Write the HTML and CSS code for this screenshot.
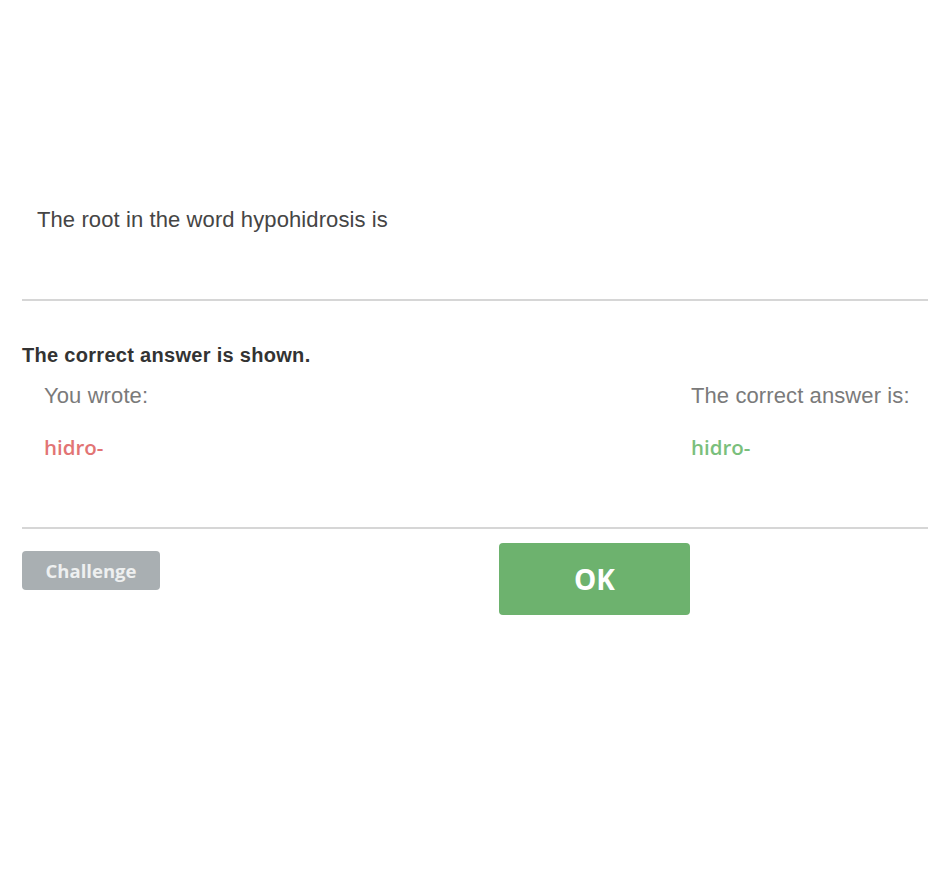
FILE: index.html
```html
<!DOCTYPE html>
<html lang="en">
<head>
  <meta charset="UTF-8">
  <meta name="viewport" content="width=device-width, initial-scale=1.0">
  <title>Question review</title>
  <link rel="stylesheet" href="styles.css">
</head>
<body>
  <div class="quiz">
    <div class="question">The root in the word hypohidrosis is</div>
    <hr class="divider">
    <div class="feedback">
      <h3>The correct answer is shown.</h3>
      <div class="answers">
        <div class="answer">
          <div class="answer-label">You wrote:</div>
          <div class="answer-value wrong">hidro-</div>
        </div>
        <div class="answer">
          <div class="answer-label">The correct answer is:</div>
          <div class="answer-value right">hidro-</div>
        </div>
      </div>
    </div>
    <hr class="divider divider-bottom">
    <div class="actions">
      <button class="btn-challenge" type="button">Challenge</button>
      <button class="btn-ok" type="button">OK</button>
    </div>
  </div>
</body>
</html>
```

FILE: styles.css
```css
body {
  font-family: 'Liberation Sans', Arial, sans-serif;
  background: #fff;
  color: #444;
  margin: 0;
  padding: 0;
}
.quiz {
  padding-left: 22px;
}
.question {
  padding-top: 207px;
  padding-left: 15px;
  font-size: 22px;
  line-height: 26px;
  color: #454545;
  letter-spacing: 0.1px;
}
.divider {
  border: none;
  border-top: 2px solid #d6d6d6;
  margin: 66px 0 0 0;
  height: 0;
}
.divider-bottom {
  margin-top: 67px;
}
.feedback h3 {
  margin: 42px 0 0 0;
  font-size: 20px;
  line-height: 24px;
  font-weight: bold;
  color: #333;
  letter-spacing: 0.3px;
}
.answers {
  display: grid;
  grid-template-columns: 647px 1fr;
  padding-left: 22px;
  margin-top: 16px;
}
.answer-label {
  font-size: 22px;
  line-height: 26px;
  color: #7a7a7a;
  letter-spacing: 0.1px;
}
.answer-value {
  margin-top: 25px;
  font-family: 'Open Sans', Arial, sans-serif;
  font-size: 20.5px;
  font-weight: 600;
  line-height: 26px;
}
.answer-value.wrong {
  color: #e27474;
}
.answer-value.right {
  color: #7abf7c;
}
.actions {
  display: flex;
  align-items: flex-start;
  margin-top: 14px;
}
.btn-challenge {
  margin-top: 8px;
  width: 138px;
  height: 39px;
  border: none;
  border-radius: 4px;
  background: #a9afb2;
  color: #eef0f0;
  font-family: 'Open Sans', Arial, sans-serif;
  font-weight: bold;
  font-size: 18.5px;
  cursor: pointer;
}
.btn-ok {
  margin-left: 339px;
  width: 191px;
  height: 72px;
  border: none;
  border-radius: 4px;
  background: #6db26e;
  color: #fff;
  font-family: 'Open Sans', Arial, sans-serif;
  font-weight: bold;
  font-size: 28px;
  cursor: pointer;
}
```
